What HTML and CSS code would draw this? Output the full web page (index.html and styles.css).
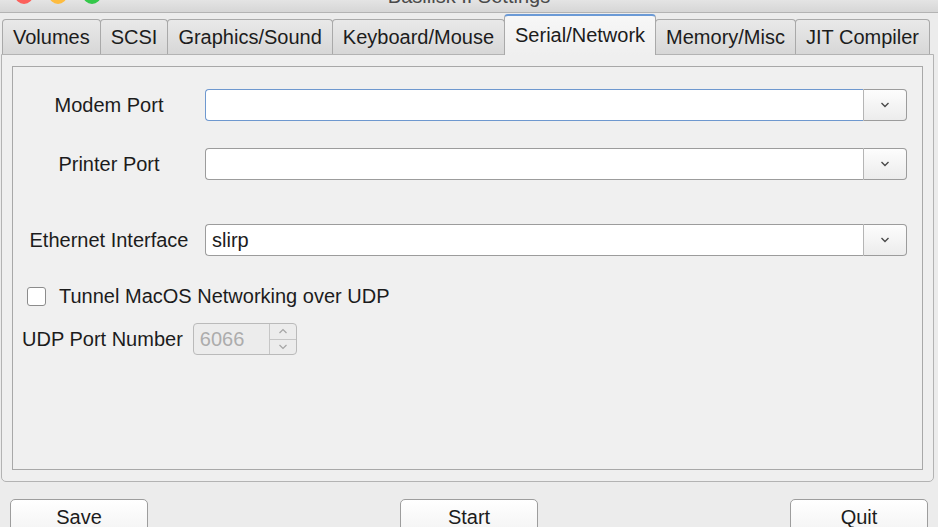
FILE: index.html
```html
<!DOCTYPE html>
<html lang="en">
<head>
    <meta charset="UTF-8">
    <title>Basilisk II Settings</title>
    <link rel="stylesheet" href="styles.css">
</head>
<body>
    <div class="window">
        <div class="titlebar">
            <div class="lights">
                <span class="light red"></span>
                <span class="light yellow"></span>
                <span class="light green"></span>
            </div>
            <div class="title">Basilisk II Settings</div>
        </div>

        <div class="tabs">
            <div class="tab">Volumes</div>
            <div class="tab">SCSI</div>
            <div class="tab">Graphics/Sound</div>
            <div class="tab">Keyboard/Mouse</div>
            <div class="tab active">Serial/Network</div>
            <div class="tab">Memory/Misc</div>
            <div class="tab">JIT Compiler</div>
        </div>

        <div class="pane">
            <div class="frame">
                <div class="field-row row-modem">
                    <span class="field-label">Modem Port</span>
                    <div class="combo focused">
                        <span class="combo-field"></span>
                        <span class="combo-btn">
                            <svg width="10" height="6" viewBox="0 0 10 6"><polyline points="1.5,1 5,4.5 8.5,1" fill="none" stroke="#4a4a4a" stroke-width="1.4"/></svg>
                        </span>
                    </div>
                </div>
                <div class="field-row row-printer">
                    <span class="field-label">Printer Port</span>
                    <div class="combo">
                        <span class="combo-field"></span>
                        <span class="combo-btn">
                            <svg width="10" height="6" viewBox="0 0 10 6"><polyline points="1.5,1 5,4.5 8.5,1" fill="none" stroke="#4a4a4a" stroke-width="1.4"/></svg>
                        </span>
                    </div>
                </div>
                <div class="field-row row-ether">
                    <span class="field-label">Ethernet Interface</span>
                    <div class="combo">
                        <span class="combo-field">slirp</span>
                        <span class="combo-btn">
                            <svg width="10" height="6" viewBox="0 0 10 6"><polyline points="1.5,1 5,4.5 8.5,1" fill="none" stroke="#4a4a4a" stroke-width="1.4"/></svg>
                        </span>
                    </div>
                </div>

                <div class="check-row">
                    <span class="checkbox"></span>
                    <span>Tunnel MacOS Networking over UDP</span>
                </div>

                <div class="udp-row">
                    <span>UDP Port Number</span>
                    <div class="spin">
                        <span class="spin-text">6066</span>
                        <span class="spin-btns">
                            <span class="spin-half">
                                <svg width="10" height="6" viewBox="0 0 10 6"><polyline points="1.5,5 5,1.5 8.5,5" fill="none" stroke="#a5a5a5" stroke-width="1.2"/></svg>
                            </span>
                            <span class="spin-half down">
                                <svg width="10" height="6" viewBox="0 0 10 6"><polyline points="1.5,1 5,4.5 8.5,1" fill="none" stroke="#a5a5a5" stroke-width="1.2"/></svg>
                            </span>
                        </span>
                    </div>
                </div>
            </div>
        </div>

        <div class="buttons">
            <button class="btn">Save</button>
            <button class="btn">Start</button>
            <button class="btn">Quit</button>
        </div>
    </div>
</body>
</html>
```

FILE: styles.css
```css
body {
    margin: 0;
    font-family: "Liberation Sans", Arial, sans-serif;
    font-size: 20px;
    color: #1c1c1c;
    background-color: #ececec;
    overflow: hidden;
}

.window {
    width: 938px;
    height: 527px;
    overflow: hidden;
    background-color: #ececec;
}

/* title bar, mostly scrolled off the top */
.titlebar {
    display: grid;
    height: 12px;
    overflow: hidden;
    background: linear-gradient(#e4e4e4, #d6d6d6);
    border-bottom: 1px solid #b3b3b3;
}

.lights,
.title {
    grid-area: 1 / 1;
}

.lights {
    display: flex;
    gap: 16px;
    padding-left: 15px;
    margin-top: -14px;
}

.light {
    width: 18px;
    height: 18px;
    border-radius: 50%;
}

.red { background-color: #fc605b; }
.yellow { background-color: #fdbc40; }
.green { background-color: #34c84a; }

.title {
    margin-top: -14px;
    line-height: 20px;
    text-align: center;
    color: #4a4a4a;
}

/* tabs */
.tabs {
    display: flex;
    align-items: flex-end;
    height: 41px;
    padding-left: 2px;
}

.tab {
    height: 35px;
    box-sizing: border-box;
    padding: 0 10px;
    line-height: 34px;
    border: 1px solid #a9a9a9;
    border-bottom: none;
    border-radius: 4px 4px 0 0;
    margin-left: -1px;
    background: linear-gradient(#e9e9e9, #d7d7d7);
    white-space: nowrap;
}

.tab:first-child {
    margin-left: 0;
}

.tab.active {
    position: relative;
    z-index: 1;
    height: 41px;
    line-height: 38px;
    margin-bottom: -1px;
    border-top: 2px solid #6b9ad6;
    background: linear-gradient(#f7f7f7, #efefef);
}

/* tab page */
.pane {
    display: flex;
    flex-direction: column;
    width: 933px;
    height: 428px;
    box-sizing: border-box;
    margin-left: 1px;
    border: 1px solid #b3b3b3;
    border-radius: 0 0 5px 5px;
    background-color: #efefef;
}

.frame {
    flex: 1;
    margin: 11px 10px 11px 10px;
    padding: 22px 15px 0 0;
    border: 1px solid #a8a8a8;
    background-color: #f0f0f0;
}

.field-row {
    display: flex;
    align-items: center;
    height: 32px;
}

.row-printer { margin-top: 27px; }
.row-ether { margin-top: 44px; }

.field-label {
    width: 178px;
    margin: 0 7px;
    text-align: center;
}

.combo {
    flex: 1;
    display: flex;
    height: 32px;
}

.combo-field {
    flex: 1;
    padding-left: 6px;
    line-height: 30px;
    background-color: #ffffff;
    border: 1px solid #9c9c9c;
    border-right: none;
    border-radius: 4px 0 0 4px;
}

.combo.focused .combo-field {
    border-color: #6e98cf;
}

.combo-btn {
    display: flex;
    align-items: center;
    justify-content: center;
    width: 42px;
    border: 1px solid #9c9c9c;
    border-left-color: #b5b5b5;
    border-radius: 0 4px 4px 0;
    background: linear-gradient(#fdfdfd, #ececec);
}

.check-row {
    display: flex;
    align-items: center;
    gap: 13px;
    height: 20px;
    margin-top: 30px;
    padding-left: 14px;
}

.checkbox {
    width: 17px;
    height: 17px;
    border: 1px solid #8c8c8c;
    border-radius: 3px;
    background-color: #ffffff;
}

.udp-row {
    display: flex;
    align-items: center;
    gap: 10px;
    margin-top: 17px;
    padding-left: 9px;
}

.spin {
    display: flex;
    width: 104px;
    height: 32px;
    box-sizing: border-box;
    border: 1px solid #bababa;
    border-radius: 4px;
    background-color: #ececec;
}

.spin-text {
    flex: 1;
    padding-left: 6px;
    line-height: 30px;
    color: #acacac;
}

.spin-btns {
    display: flex;
    flex-direction: column;
    width: 26px;
    border-left: 1px solid #c6c6c6;
}

.spin-half {
    flex: 1;
    display: flex;
    align-items: center;
    justify-content: center;
}

.spin-half.down {
    border-top: 1px solid #c6c6c6;
}

/* bottom buttons */
.buttons {
    display: flex;
    justify-content: space-between;
    padding: 17px 10px 0 10px;
}

.btn {
    width: 138px;
    height: 36px;
    font-family: "Liberation Sans", Arial, sans-serif;
    font-size: 20px;
    color: #1c1c1c;
    border: 1px solid #9d9d9d;
    border-radius: 5px;
    background: linear-gradient(#ffffff, #f3f3f3);
    padding: 0;
}
```
